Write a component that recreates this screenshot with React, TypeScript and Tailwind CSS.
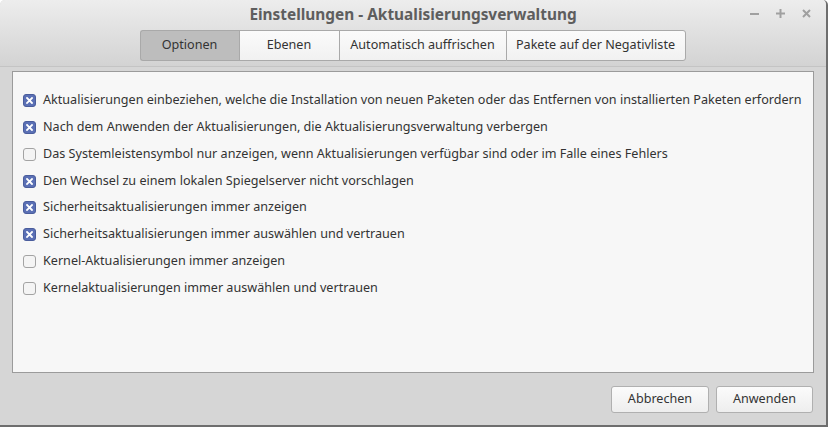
import React from 'react';

// Settings dialog of the update manager (German locale)
interface Option {
  label: string;
  checked: boolean;
}

const options: Option[] = [
  { label: 'Aktualisierungen einbeziehen, welche die Installation von neuen Paketen oder das Entfernen von installierten Paketen erfordern', checked: true },
  { label: 'Nach dem Anwenden der Aktualisierungen, die Aktualisierungsverwaltung verbergen', checked: true },
  { label: 'Das Systemleistensymbol nur anzeigen, wenn Aktualisierungen verfügbar sind oder im Falle eines Fehlers', checked: false },
  { label: 'Den Wechsel zu einem lokalen Spiegelserver nicht vorschlagen', checked: true },
  { label: 'Sicherheitsaktualisierungen immer anzeigen', checked: true },
  { label: 'Sicherheitsaktualisierungen immer auswählen und vertrauen', checked: true },
  { label: 'Kernel-Aktualisierungen immer anzeigen', checked: false },
  { label: 'Kernelaktualisierungen immer auswählen und vertrauen', checked: false },
];

const tabs = [
  { label: 'Optionen', width: 'w-[99px]', active: true },
  { label: 'Ebenen', width: 'w-[100px]', active: false },
  { label: 'Automatisch auffrischen', width: 'w-[167px]', active: false },
  { label: 'Pakete auf der Negativliste', width: 'w-[180px]', active: false },
];

const CheckBox: React.FC<{ checked: boolean }> = ({ checked }) =>
  checked ? (
    <span className="flex h-[13px] w-[13px] shrink-0 items-center justify-center rounded-[3px] border border-[#4a5d9c] bg-[#5b70b5]">
      <svg width="7" height="7" viewBox="0 0 7 7">
        <path d="M1 1 L6 6 M6 1 L1 6" stroke="#ffffff" strokeWidth="1.8" strokeLinecap="square" />
      </svg>
    </span>
  ) : (
    <span className="h-[13px] w-[13px] shrink-0 rounded-[3px] border border-[#a3a3a3] bg-[#f4f4f4]" />
  );

const App: React.FC = () => {
  return (
    <div
      className="flex h-[427px] w-[828px] flex-col overflow-hidden rounded-t-[5px] border-r-2 border-b-2 border-[#6e6e6e] bg-[#d6d6d6] text-[12.6px] text-[#333333]"
      style={{ fontFamily: '"Noto Sans", "Open Sans", sans-serif' }}
    >
      {/* header: title + tabs */}
      <div className="flex h-[67px] shrink-0 flex-col border-b border-[#c4c4c4] bg-gradient-to-b from-[#ededed] to-[#d3d3d3]">
        <div className="relative flex h-[30px] items-center justify-center">
          <span className="text-[15.4px] font-bold text-[#5e5e5e]">Einstellungen - Aktualisierungsverwaltung</span>
          <div className="absolute right-[15px] top-[9px] flex items-center gap-[17px]">
            <svg width="9" height="9" viewBox="0 0 9 9">
              <path d="M0 5 H9" stroke="#a0a0a0" strokeWidth="2" />
            </svg>
            <svg width="9" height="9" viewBox="0 0 9 9">
              <path d="M0 4.5 H9 M4.5 0 V9" stroke="#a0a0a0" strokeWidth="2" />
            </svg>
            <svg width="9" height="9" viewBox="0 0 9 9">
              <path d="M1 1 L8 8 M8 1 L1 8" stroke="#a0a0a0" strokeWidth="2" />
            </svg>
          </div>
        </div>
        <div className="flex justify-center pr-[1px]">
          <div className="flex h-[31px] text-[13px]">
            {tabs.map((t, i) => (
              <div
                key={t.label}
                className={`flex items-center justify-center border-y border-[#a9a9a9] ${t.width} ${
                  i === 0 ? 'rounded-l-[3px] border-l' : ''
                } ${i === tabs.length - 1 ? 'rounded-r-[3px] border-r' : ''} ${i > 0 ? 'border-l' : ''} ${
                  t.active ? 'bg-[#bdbdbd] text-[#333]' : 'bg-gradient-to-b from-[#fbfbfb] to-[#f1f1f1]'
                }`}
              >
                <span className="text-[12.6px]">{t.label}</span>
              </div>
            ))}
          </div>
        </div>
      </div>

      {/* options panel */}
      <div className="mx-[12px] mt-[4px] h-[302px] border border-[#9b9b9b] bg-[#f7f7f7] pt-[15px] pl-[10px]">
        <div className="flex flex-col">
          {options.map((o) => (
            <label key={o.label} className="flex h-[26.86px] items-center gap-[7px] whitespace-nowrap">
              <CheckBox checked={o.checked} />
              <span>{o.label}</span>
            </label>
          ))}
        </div>
      </div>

      {/* buttons */}
      <div className="flex justify-end gap-[7px] pr-[13px] pt-[13px]">
        <button className="h-[27px] w-[98px] rounded-[3px] border border-[#b0b0b0] bg-gradient-to-b from-[#fbfbfb] to-[#eeeeee] text-[#333]">
          Abbrechen
        </button>
        <button className="h-[27px] w-[97px] rounded-[3px] border border-[#b0b0b0] bg-gradient-to-b from-[#fbfbfb] to-[#eeeeee] text-[#333]">
          Anwenden
        </button>
      </div>
    </div>
  );
};

export default App;
